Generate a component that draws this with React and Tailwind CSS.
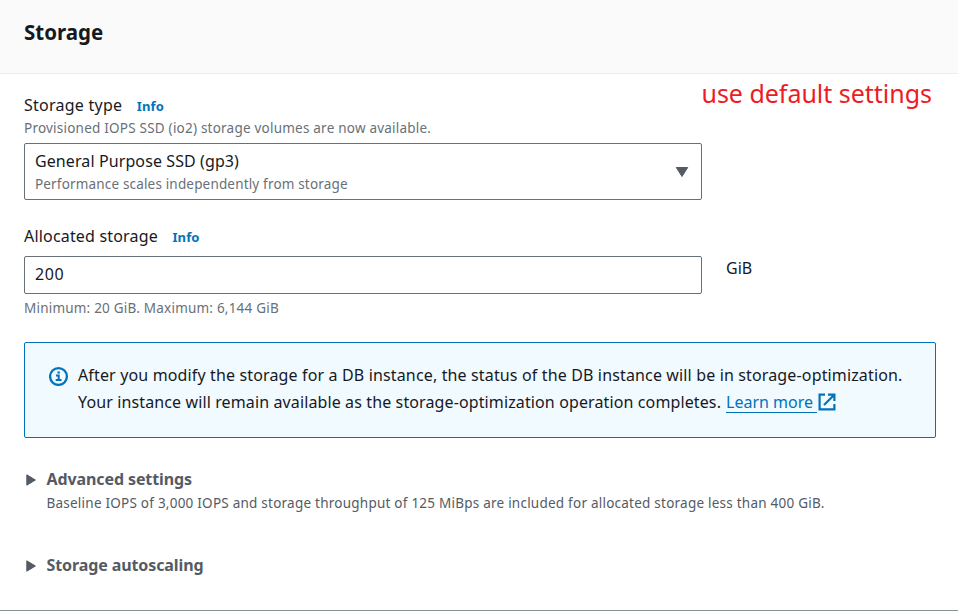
import React from "react";

function InfoLink() {
  return (
    <a href="#" className="relative top-px ml-[14.5px] text-[13px] leading-5 font-bold tracking-[0.1px] text-[#0073bb]">
      Info
    </a>
  );
}

function InfoIcon() {
  return (
    <svg viewBox="0 0 20 20" className="mt-[5px] ml-6 size-5 shrink-0" fill="none" stroke="#0073bb">
      <circle cx="9.500" cy="10.500" r="8.400" strokeWidth="2.3" />
      <path d="M7 9.500h2.700v4.500M6.700 14h5.800" strokeWidth="2" />
      <path d="M8.500 6.500h2.300" strokeWidth="2.2" />
    </svg>
  );
}

function ExternalIcon() {
  return (
    <svg viewBox="0 0 18 18" className="mb-px ml-px size-[18px]" fill="none" stroke="#0073bb" strokeWidth="2.2">
      <path d="M7 1.600H1.600v14.800h14.800V11M10 1.600h6.400v6.400M16 2L6 12" />
    </svg>
  );
}

function Expandable({ title, className, children }) {
  return (
    <section className={className}>
      <div className="flex h-6 items-center">
        <svg viewBox="0 0 10 12" className="mt-px ml-0.5 h-3 w-2.5">
          <path d="M.8.8v10.400L9.400 6z" fill="#545b64" stroke="#545b64" strokeLinejoin="round" />
        </svg>
        <h3 className="ml-[10.5px] text-[16px] leading-6 font-bold tracking-[-0.1px] text-[#545b64]">{title}</h3>
      </div>
      {children}
    </section>
  );
}

export default function App() {
  return (
    <main className="flex h-[611px] w-[958px] flex-col overflow-hidden border-b border-[#879596] bg-white font-['Noto_Sans',sans-serif] text-[#16191f]">
      <header className="h-[74px] shrink-0 border-b border-[#eaeded] bg-[#fafafa] px-6 pt-[17px]">
        <h2 className="text-[20.5px] leading-[30px] font-bold">Storage</h2>
      </header>
      <div className="flex flex-col pr-[22px] pl-6">
        <div className="flex justify-between">
          <div className="pt-[19px]">
            <div className="flex h-6 items-center text-[16px] leading-6 tracking-[0.25px]">
              <span>Storage type</span>
              <InfoLink />
            </div>
            <p className="text-[13.5px] leading-[22px] tracking-[0.22px] text-[#687078]">
              Provisioned IOPS SSD (io2) storage volumes are now available.
            </p>
          </div>
          <p className="mt-px mr-1 text-[25px] leading-9 tracking-[-0.02px] whitespace-nowrap text-[#ed1c24]">
            use default settings
          </p>
        </div>
        <button className="mt-1 flex h-[57px] w-[678px] items-center justify-between rounded-xs border border-[#687078] pr-3 pl-2.5 text-left">
          <span className="flex flex-col">
            <span className="text-[16px] leading-6 tracking-[0.1px]">General Purpose SSD (gp3)</span>
            <span className="text-[13.5px] leading-[22px] tracking-[0.17px] text-[#687078]">
              Performance scales independently from storage
            </span>
          </span>
          <svg viewBox="0 0 14 12" className="h-3 w-3.5">
            <path d="M1.300 1.500h11.400L7 10.500z" fill="#545b64" stroke="#545b64" strokeLinejoin="round" />
          </svg>
        </button>
        <div className="mt-6 flex h-6 items-center text-[16px] leading-6 tracking-[0.18px]">
          <span>Allocated storage</span>
          <InfoLink />
        </div>
        <div className="mt-2 flex">
          <input
            defaultValue="200"
            className="h-[38px] w-[678px] rounded-xs border border-[#687078] px-2.5 pb-0.5 text-[16px] tracking-[0.6px]"
          />
          <span className="ml-6 text-[16px] leading-6">GiB</span>
        </div>
        <p className="mt-[3px] text-[13.5px] leading-[22px] tracking-[0.21px] text-[#687078]">
          Minimum: 20 GiB. Maximum: 6,144 GiB
        </p>
        <div className="mt-[23px] flex h-24 rounded-xs border border-[#0073bb] bg-[#f1faff] pt-[18px]">
          <InfoIcon />
          <div className="mt-px ml-[9px] text-[16px] leading-[27px] whitespace-nowrap">
            <p className="tracking-[0.145px]">
              After you modify the storage for a DB instance, the status of the DB instance will be in storage-optimization.
            </p>
            <p className="flex items-center">
              <span className="tracking-[0.12px]">
                Your instance will remain available as the storage-optimization operation completes.
              </span>
              <a href="#" className="ml-[5px] flex items-center text-[#0073bb]">
                <span className="h-[21px] border-b border-[#0073bb] pr-1 leading-[20px]">Learn more</span>
                <ExternalIcon />
              </a>
            </p>
          </div>
        </div>
        <Expandable title="Advanced settings" className="mt-[29px]">
          <p className="ml-[22.5px] text-[13.5px] leading-6 tracking-[0.235px] text-[#545b64]">
            Baseline IOPS of 3,000 IOPS and storage throughput of 125 MiBps are included for allocated storage less than 400 GiB.
          </p>
        </Expandable>
        <Expandable title="Storage autoscaling" className="mt-[38px]" />
      </div>
    </main>
  );
}
